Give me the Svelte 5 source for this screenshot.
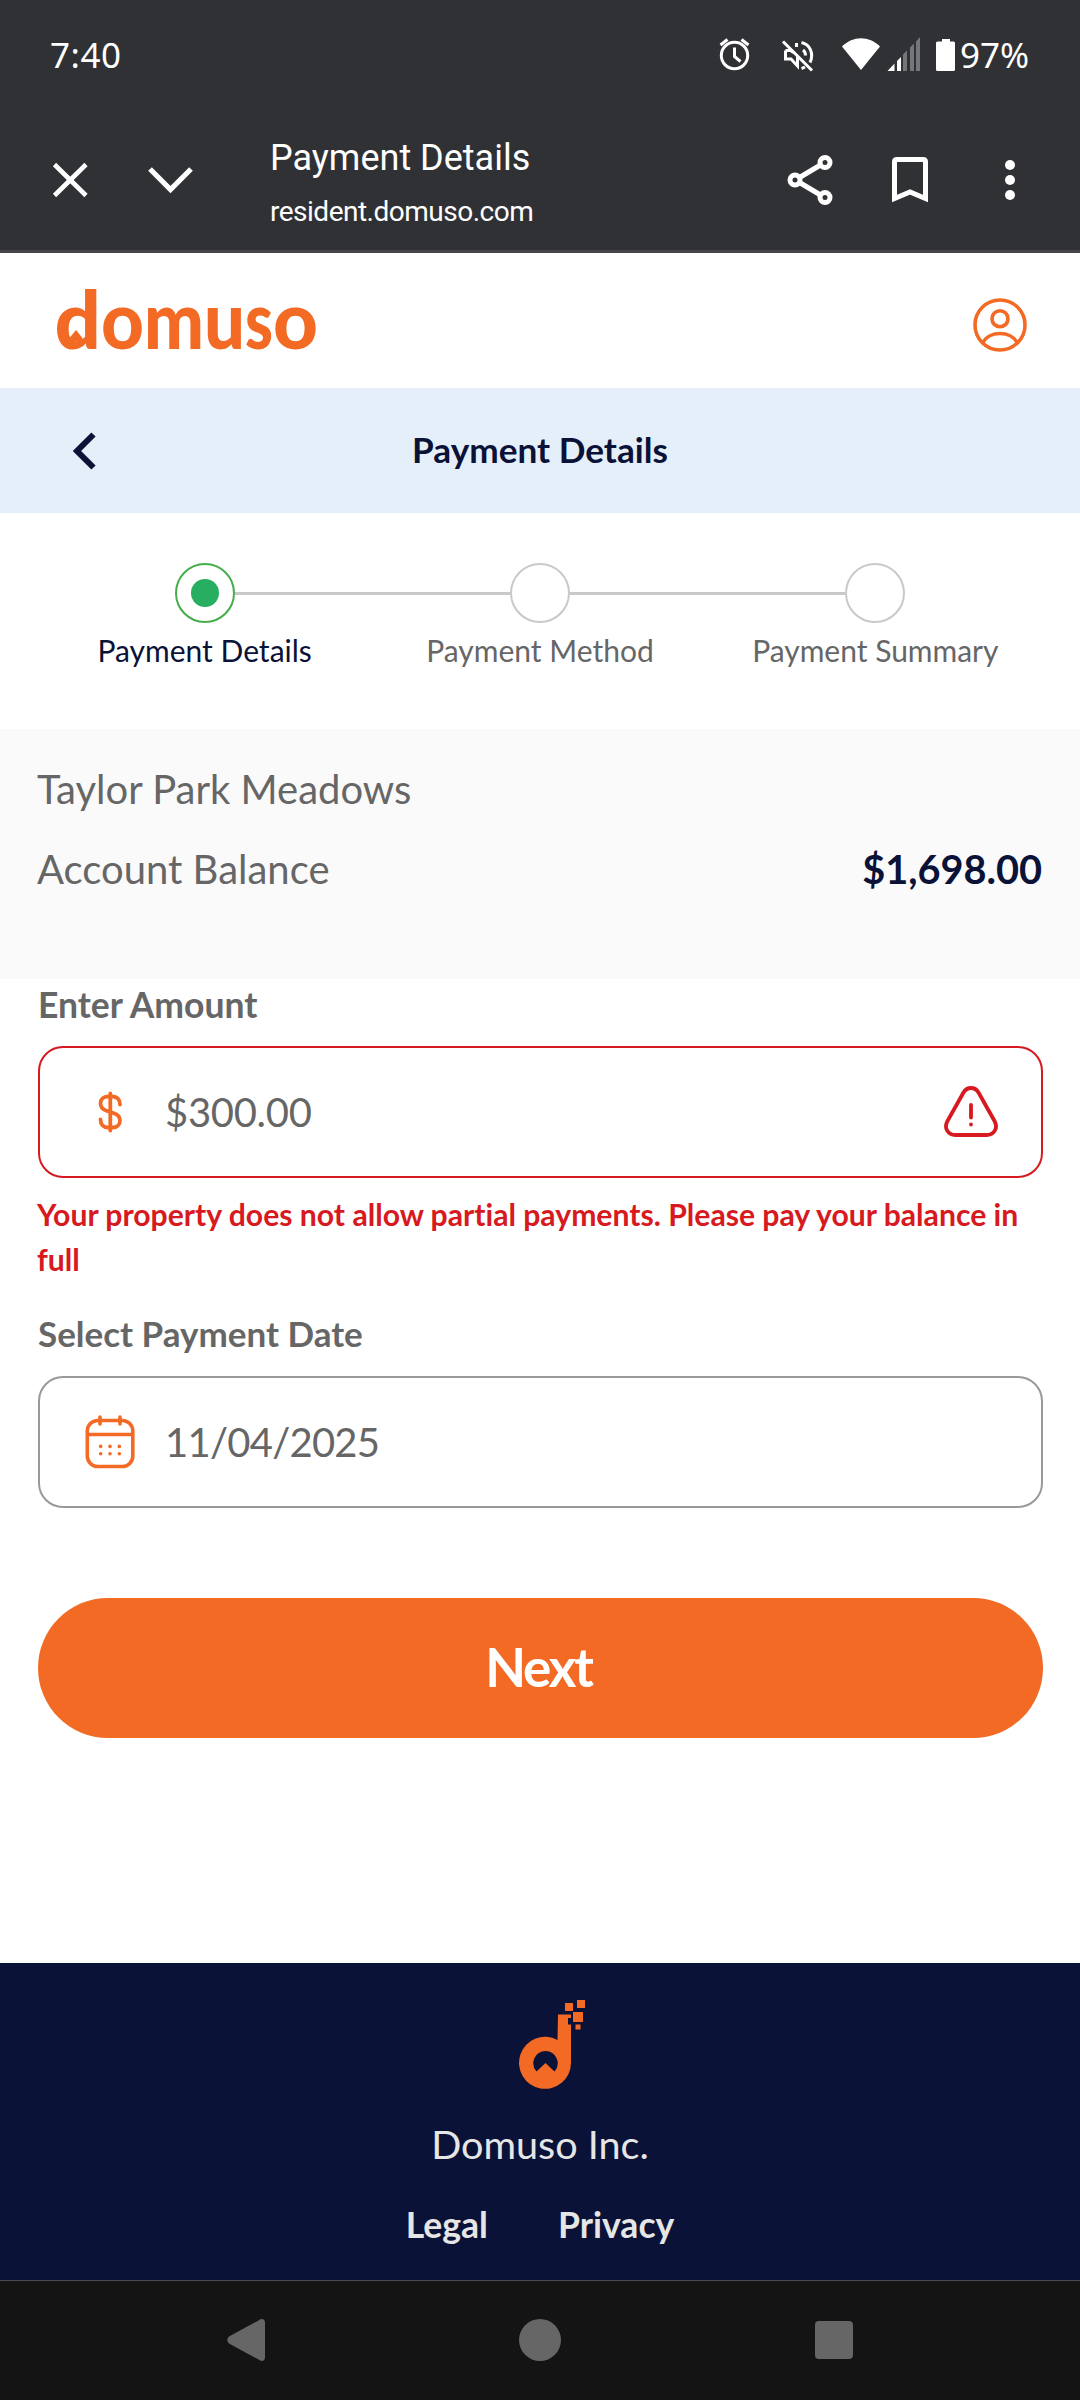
<script lang="ts">
  let amount = $state('$300.00');
  let date = $state('11/04/2025');

  const steps = [
    { label: 'Payment Details', active: true },
    { label: 'Payment Method', active: false },
    { label: 'Payment Summary', active: false }
  ];

  const links = ['Legal', 'Privacy'];
</script>

<div class="screen">
  <div class="browser">
    <div class="status">
      <span class="clock">7:40</span>
      <svg class="status-icons" width="240" height="40" viewBox="716 35 240 40">
        <g fill="none" stroke="#fff" stroke-width="3">
          <circle cx="734.5" cy="55.5" r="13.2" />
          <path d="M734.5 47.5v9l6 5M720.5 45l7-5.5M748.5 45l-7-5.500" />
          <path d="M783 41.500l29 29M785.500 50.500v8.500h5.500l6.500 7v-10M785.500 50.500h5l3 2M796.500 47v-4" />
          <path d="M801.500 42.500c9 2 12.500 11.500 8.500 20M803 50c2 1.500 2.500 3 2.500 5.500M801.500 68.500c1.500-.5 2.500-1 3.500-1.500" />
        </g>
        <path fill="#fff" d="M861 70L842 46.500C853 35.500 869 35.500 880 46.500Z" />
        <path fill="#fff" d="M887.500 71l7-7.500v7.500zM897 61l4-4v14h-4z" />
        <path fill="#75767a" d="M903 54.500l4-4V71h-4zM910 47.500l4-4V71h-4zM916 41.500l4-4.500v34h-4z" />
        <path fill="#fff" d="M942 39h8v2.500h3.500q1.500 0 1.500 1.500v26.500q0 1.500-1.500 1.500h-16q-1.500 0-1.500-1.500V43q0-1.500 1.500-1.500h4.500z" />
      </svg>
      <span class="battery">97%</span>
    </div>

    <div class="toolbar">
      <svg width="150" height="60" viewBox="50 150 150 60" fill="none" stroke="#fff">
        <path stroke-width="4.600" d="M54.500 164.500l31.500 31M86 164.500l-31.500 31" />
        <path stroke-width="5.200" d="M150 169l20.500 20.500L191 169" />
      </svg>
      <div class="page">
        <span class="page-title">Payment Details</span>
        <span class="page-url">resident.domuso.com</span>
      </div>
      <svg width="240" height="60" viewBox="780 150 240 60" fill="none" stroke="#fff" stroke-width="5">
        <circle cx="795" cy="180" r="5" />
        <circle cx="825" cy="162.500" r="5" />
        <circle cx="825" cy="197.500" r="5" />
        <path d="M799.500 177.500l21-12.500M799.500 182.500l21 12.500" />
        <path d="M894.500 198.500V162q0-2.500 2.500-2.500h26q2.500 0 2.500 2.500v36.500L910 192z" />
        <g fill="#fff" stroke="none">
          <circle cx="1010" cy="165" r="5" />
          <circle cx="1010" cy="180" r="5" />
          <circle cx="1010" cy="195" r="5" />
        </g>
      </svg>
    </div>
  </div>

  <header>
    <svg class="logo" width="270" height="112" viewBox="54 269 270 112">
      <text y="348.500"><tspan x="54.500" textLength="46.500" lengthAdjust="spacingAndGlyphs">d</tspan><tspan x="101" textLength="43" lengthAdjust="spacingAndGlyphs">o</tspan><tspan x="144" textLength="60" lengthAdjust="spacingAndGlyphs">m</tspan><tspan x="204" textLength="41" lengthAdjust="spacingAndGlyphs">u</tspan><tspan x="245" textLength="28" lengthAdjust="spacingAndGlyphs">s</tspan><tspan x="273" textLength="45" lengthAdjust="spacingAndGlyphs">o</tspan></text>
      <path d="M69.500 338l6.500-8 6.500 8v3h-13z" />
    </svg>
    <svg width="56" height="56" viewBox="972 297 56 56" fill="none" stroke="#f26a24" stroke-width="3.600">
      <circle cx="1000" cy="325" r="25" />
      <circle cx="1000" cy="318.700" r="8" />
      <path d="M983 342.500c6-12 28-12 34 0" />
    </svg>
  </header>

  <div class="title-bar">
    <svg width="24" height="40" viewBox="73 430 24 40" fill="none" stroke="#0b1237" stroke-width="6">
      <path d="M93.500 433.500L77 450l16.500 16.500" />
    </svg>
    <h1>Payment Details</h1>
  </div>

  <ol class="steps">
    {#each steps as step (step.label)}
      <li class:active={step.active}>
        <span class="dot"></span>
        <span>{step.label}</span>
      </li>
    {/each}
  </ol>

  <section class="balance">
    <p>Taylor Park Meadows</p>
    <p class="balance-row">
      <span>Account Balance</span>
      <strong>$1,698.00</strong>
    </p>
  </section>

  <form onsubmit={(event) => event.preventDefault()}>
    <label for="amount">Enter Amount</label>
    <div class="field invalid">
      <svg width="56" height="56" viewBox="82 1084 56 56" fill="none" stroke="#f26a24" stroke-width="3.800" stroke-linecap="round">
        <path d="M120 1104.500c0-5-3-8-7.500-8h-4.500c-4.500 0-7.500 3-7.500 7 0 4.500 2.500 6 6 7.200l7.500 2.600c3.500 1.200 6 2.700 6 7.200 0 4-3 7-7.500 7h-4.500c-4.500 0-7.500-3-7.500-8M110.300 1093.500v37" />
      </svg>
      <input id="amount" bind:value={amount} />
      <svg width="56" height="56" viewBox="943 1084 56 56" fill="none" stroke="#d71920" stroke-width="3.800" stroke-linecap="round">
        <path d="M963.500 1092.500c3.500-6 11.500-6 15 0l16 28.500c4 7-.5 14-8 14h-31c-7.500 0-12-7-8-14z" />
        <path d="M971 1105v12.500M971 1124.500v.1" />
      </svg>
    </div>
    <p class="message">Your property does not allow partial payments. Please pay your balance in full</p>

    <label class="date-label" for="date">Select Payment Date</label>
    <div class="field">
      <svg width="56" height="56" viewBox="82 1414 56 56" fill="none" stroke="#f26a24" stroke-width="3.600" stroke-linecap="round">
        <rect x="87.300" y="1420.500" width="45.500" height="46" rx="10.500" />
        <path d="M100 1417v7M120 1417v7M88 1434.500h44" />
        <path d="M100.700 1446.300v.1M110 1446.300v.1M119.300 1446.300v.1M100.700 1453.700v.1M110 1453.700v.1M119.300 1453.700v.1" />
      </svg>
      <input id="date" class="date" bind:value={date} />
    </div>

    <button>Next</button>
  </form>

  <footer>
    <svg width="70" height="92" viewBox="516 1999 70 92" fill="#f26a24">
      <path fill-rule="evenodd" d="M558 2014.500h13v3.500h-3v6.500h3V2063a26 26 0 1 1-13.500-23zM545.500 2051a12.300 12.300 0 0 0-9 20.500l9-8.500 9 8.500a12.300 12.300 0 0 0-9-20.500z" />
      <rect x="565" y="2003" width="8" height="8" />
      <rect x="577" y="2000" width="8" height="8" />
      <rect x="573" y="2012" width="10" height="10" />
      <rect x="575.500" y="2024.500" width="5" height="5" />
    </svg>
    <p>Domuso Inc.</p>
    <nav>
      {#each links as link (link)}
        <a href="#{link.toLowerCase()}">{link}</a>
      {/each}
    </nav>
  </footer>

  <div class="system-nav">
    <svg width="40" height="44" viewBox="225 2318 40 44">
      <path fill="#666" d="M229 2336.500L258.500 2320.500c3-2.500 6.500-1.500 6.500 2v35c0 3.500-3.500 4.500-6.500 2L229 2343.500q-3.500-3.500 0-7z" />
    </svg>
    <span class="home"></span>
    <span class="recent"></span>
  </div>
</div>

<style>
  :global(body) {
    margin: 0;
  }

  .screen {
    display: flex;
    flex-direction: column;
    width: 1080px;
    height: 2400px;
    overflow: hidden;
    background: #fff;
    color: #666;
    font-family: Lato, sans-serif;
    font-variant-ligatures: none;
  }

  svg {
    display: block;
    flex: none;
  }

  p,
  h1,
  ol {
    margin: 0;
    padding: 0;
  }

  .browser {
    box-sizing: border-box;
    height: 253px;
    border-bottom: 3px solid #46464a;
    background: #303135;
    color: #fff;
    font-family: Roboto, sans-serif;
  }

  .status {
    display: flex;
    align-items: center;
    height: 110px;
    padding-left: 50px;
    font-family: "Noto Sans", sans-serif;
    font-size: 35px;
  }

  .clock {
    width: 666px;
    padding-bottom: 2px;
    letter-spacing: 0.5px;
  }

  .battery {
    margin-left: 4px;
    padding-bottom: 2px;
  }

  .toolbar {
    display: flex;
    align-items: center;
    height: 140px;
    padding-left: 50px;
  }

  .page {
    display: flex;
    flex-direction: column;
    box-sizing: border-box;
    width: 510px;
    margin-left: 70px;
    padding-top: 10px;
  }

  .page-title {
    font-size: 36px;
    line-height: 54px;
  }

  .page-url {
    font-size: 28px;
    line-height: 54px;
    letter-spacing: -0.5px;
  }

  header {
    display: flex;
    align-items: center;
    justify-content: space-between;
    height: 135px;
    padding: 9px 52px 0 54px;
    box-sizing: border-box;
  }

  .logo {
    overflow: visible;
    fill: #f26a24;
    font-size: 80px;
    font-weight: 900;
  }

  .title-bar {
    display: grid;
    grid-template-columns: 100px 1fr 100px;
    align-items: center;
    height: 125px;
    background: #e5effa;
    color: #0b1237;
  }

  .title-bar svg {
    margin-left: 73px;
  }

  h1 {
    padding-bottom: 4px;
    font-size: 35.2px;
    font-weight: 700;
    text-align: center;
  }

  .steps {
    display: flex;
    box-sizing: border-box;
    height: 216px;
    padding: 50px 37px 0;
    list-style: none;
    font-size: 30px;
  }

  li {
    display: grid;
    grid-template-columns: 1fr 60px 1fr;
    align-items: center;
    align-content: start;
    row-gap: 9px;
    flex: 1;
    text-align: center;
  }

  li::before,
  li::after {
    content: '';
    height: 3px;
    background: #c9c9c9;
  }

  li::before {
    order: -1;
  }

  li:first-child::before,
  li:last-child::after {
    background: none;
  }

  li::after {
    order: 1;
  }

  li span:last-child {
    grid-column: 1 / -1;
    order: 2;
    line-height: 36px;
  }

  .dot {
    display: grid;
    place-items: center;
    box-sizing: border-box;
    height: 60px;
    border: 2px solid #c9c9c9;
    border-radius: 50%;
  }

  .active {
    color: #0b1237;
  }

  .active .dot {
    border-color: #45ad4a;
  }

  .active .dot::after {
    content: '';
    width: 28px;
    height: 28px;
    border-radius: 50%;
    background: #27ae60;
  }

  .balance {
    box-sizing: border-box;
    height: 250px;
    padding: 20px 38px 0 37px;
    background: #fafafb;
    font-size: 40px;
    line-height: 80px;
  }

  .balance-row {
    display: flex;
    justify-content: space-between;
  }

  strong {
    color: #0b1237;
    font-size: 39.7px;
  }

  form {
    display: flex;
    flex-direction: column;
    height: 984px;
    padding: 0 37px 0 38px;
  }

  label {
    height: 67px;
    font-size: 35.5px;
    font-weight: 700;
    line-height: 52px;
  }

  .field {
    display: flex;
    align-items: center;
    box-sizing: border-box;
    height: 132px;
    padding: 0 42px;
    border: 2px solid #999;
    border-radius: 25px;
  }

  .invalid {
    border-color: #d71920;
  }

  input {
    flex: 1;
    min-width: 0;
    padding: 0;
    margin-left: 27px;
    border: 0;
    outline: 0;
    background: none;
    color: #666;
    font: 40px Lato, sans-serif;
    letter-spacing: -0.3px;
  }

  .date {
    letter-spacing: -0.75px;
  }

  .message {
    height: 129px;
    margin-left: -1px;
    padding-top: 14px;
    box-sizing: border-box;
    color: #d71920;
    font-size: 30.15px;
    font-weight: 700;
    line-height: 45px;
  }

  .date-label {
    height: 69px;
    font-size: 35px;
  }

  button {
    height: 140px;
    margin-top: 90px;
    padding: 0 8px 4px 4px;
    border: 0;
    border-radius: 70px;
    background: #f26a24;
    color: #fff;
    font: 700 53px Lato, sans-serif;
    letter-spacing: -2.2px;
  }

  footer {
    display: flex;
    flex-direction: column;
    align-items: center;
    box-sizing: border-box;
    height: 317px;
    padding-top: 36px;
    background: #0b1237;
    color: #e6e6e6;
    font-size: 39.6px;
  }

  footer svg {
    margin-left: 22px;
  }

  footer p {
    margin-top: 29px;
    line-height: 48px;
  }

  nav {
    display: flex;
    gap: 70px;
    margin-top: 36px;
    font-size: 35.6px;
    font-weight: 700;
    line-height: 42px;
  }

  a {
    color: inherit;
    text-decoration: none;
  }

  .system-nav {
    display: flex;
    align-items: center;
    justify-content: space-between;
    box-sizing: border-box;
    height: 120px;
    padding: 0 227px 1px 225px;
    border-top: 1px solid #4b4750;
    background: #141414;
  }

  .home {
    width: 42px;
    height: 42px;
    border-radius: 50%;
    background: #666;
  }

  .recent {
    width: 38px;
    height: 38px;
    border-radius: 4px;
    background: #666;
  }
</style>
